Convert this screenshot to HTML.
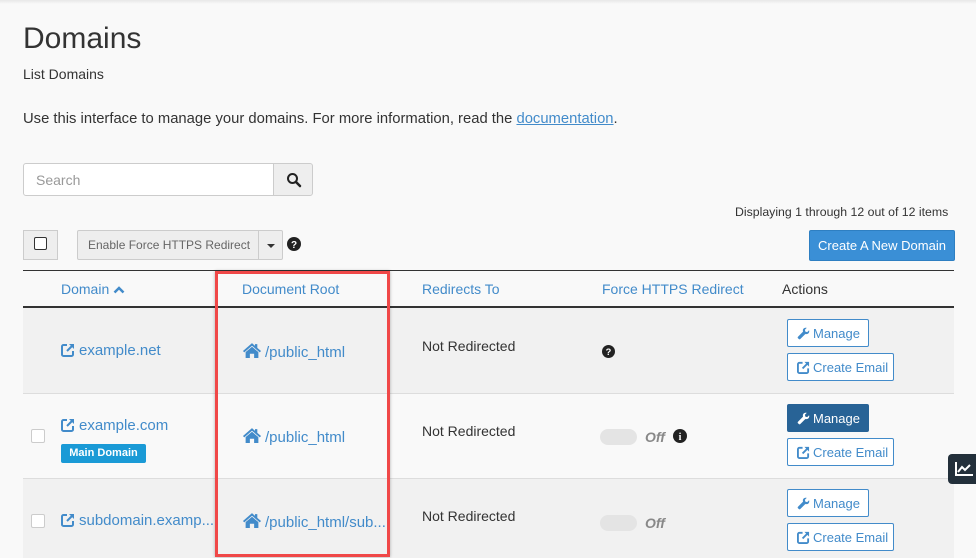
<!DOCTYPE html>
<html><head><style>
body{margin:0;width:976px;height:558px;overflow:hidden;background:#f9f9f9;font-family:"Liberation Sans",sans-serif;color:#333;position:relative}
.a{position:absolute}
.link{color:#428bca}
.btn{position:absolute;border:1px solid #428bca;color:#428bca;font-size:13px;height:28px;line-height:27px;box-sizing:border-box;background:#fff;padding-left:9px;border-radius:2px}
.btn svg{vertical-align:-2px;margin-right:3px}
.row{position:absolute;left:23px;width:931px;height:85px;border-top:1px solid #ddd;box-sizing:border-box}
.tog{position:absolute;width:37px;height:16px;border-radius:8px;background:#e4e4e4}
.off{position:absolute;font-style:italic;font-weight:bold;color:#888;font-size:14px}
.cb{position:absolute;width:12px;height:12px;border:1px solid #ccc;border-radius:2px;background:#fff}
.ic{vertical-align:-2px;margin-right:4px}
</style></head><body>
<svg width="0" height="0" style="position:absolute">
<defs>
<symbol id="ext" viewBox="0 0 14 14"><path d="M6 2H2.5C1.7 2 1 2.7 1 3.5v8C1 12.3 1.7 13 2.5 13h8c.8 0 1.5-.7 1.5-1.5V8" fill="none" stroke="currentColor" stroke-width="2"/><path d="M8 1h5v5z" fill="currentColor"/><path d="M12 2L6 8" stroke="currentColor" stroke-width="2"/></symbol>
<symbol id="home" viewBox="0 0 18 16"><path d="M9 1L0.5 8.5l1.2 1.3L9 3.5l7.3 6.3 1.2-1.3L14 5.5V2h-2.2v1.6z" fill="currentColor"/><path d="M3 9.5L9 4.5l6 5V15h-4v-4H7v4H3z" fill="currentColor"/></symbol>
<symbol id="wr" viewBox="0 0 14 14"><path d="M13 3.5l-2 2-2-.5-.5-2 2-2C8.5.3 6.3 1.5 6.3 3.8c0 .5.1.9.2 1.2L1.2 10.3a1.3 1.3 0 0 0 0 1.9l.6.6a1.3 1.3 0 0 0 1.9 0L9 7.5c.3.1.7.2 1.2.2 2.3 0 3.5-2.2 2.8-4.2z" fill="currentColor"/></symbol>
</defs></svg>
<div class="a" style="left:0;top:0;width:976px;height:4px;background:linear-gradient(#e8e8e8,#f9f9f9)"></div>
<div class="a" style="left:23px;top:22px;font-size:30px;color:#333">Domains</div>
<div class="a" style="left:23px;top:66px;font-size:14px">List Domains</div>
<div class="a" style="left:23px;top:111px;font-size:14.8px">Use this interface to manage your domains. For more information, read the <span class="link" style="text-decoration:underline">documentation</span>.</div>
<div class="a" style="left:23px;top:163px;width:251px;height:33px;border:1px solid #ccc;border-radius:3px 0 0 3px;background:#fff;box-sizing:border-box"><span style="position:absolute;left:12px;top:8px;font-size:14px;color:#999">Search</span></div>
<div class="a" style="left:273px;top:163px;width:40px;height:33px;border:1px solid #ccc;background:#eee;box-sizing:border-box;border-radius:0 3px 3px 0">
<svg width="16" height="16" viewBox="0 0 16 16" style="position:absolute;left:12px;top:8px"><circle cx="6.5" cy="6.5" r="4.5" fill="none" stroke="#222" stroke-width="2"/><path d="M10 10L14 14" stroke="#222" stroke-width="2.5" stroke-linecap="round"/></svg></div>
<div class="a" style="left:735px;top:205px;font-size:12.3px">Displaying 1 through 12 out of 12 items</div>
<div class="a" style="left:23px;top:230px;width:35px;height:30px;border:1px solid #ccc;background:#eee;box-sizing:border-box"><div style="position:absolute;left:10px;top:6px;width:11px;height:11px;border:1px solid #333;border-radius:2px;background:#fff"></div></div>
<div class="a" style="left:77px;top:230px;width:206px;height:30px;border:1px solid #ccc;background:#eee;box-sizing:border-box;border-radius:2px;font-size:12px;color:#666"><span style="position:absolute;left:10px;top:7px">Enable Force HTTPS Redirect</span><div style="position:absolute;left:180px;top:0;width:1px;height:28px;background:#ccc"></div><div style="position:absolute;left:189px;top:13px;border:4px solid transparent;border-top-color:#333"></div></div>
<svg class="a" style="left:287px;top:237px" width="14" height="14" viewBox="0 0 14 14"><circle cx="7" cy="7" r="7" fill="#222"/><text x="7" y="11" fill="#fff" font-size="10" font-weight="bold" text-anchor="middle" font-family="Liberation Sans">?</text></svg>
<div class="a" style="left:809px;top:230px;width:146px;height:31px;background:#3a8fd6;border:1px solid #2e7fc2;box-sizing:border-box;border-radius:2px;color:#fff;font-size:13px;line-height:29px;text-align:center">Create A New Domain</div>
<div class="a" style="left:23px;top:270px;width:931px;height:1px;background:#333"></div>
<div class="a" style="left:23px;top:306px;width:931px;height:2px;background:#333"></div>
<div class="a link" style="left:61px;top:281px;font-size:14px">Domain <svg width="12" height="9" viewBox="0 0 12 9" style="vertical-align:0"><path d="M1.5 7.5L6 3l4.5 4.5" fill="none" stroke="#428bca" stroke-width="2.5"/></svg></div>
<div class="a link" style="left:242px;top:281px;font-size:14px">Document Root</div>
<div class="a link" style="left:422px;top:281px;font-size:14px">Redirects To</div>
<div class="a link" style="left:602px;top:281px;font-size:14px">Force HTTPS Redirect</div>
<div class="a" style="left:782px;top:281px;font-size:14px">Actions</div>
<div class="row" style="top:308px;background:#f1f1f1;border-top:none"></div>
<div class="row" style="top:393px;background:#f9f9f9"></div>
<div class="row" style="top:478px;background:#f1f1f1;height:80px"></div>
<!-- row1 -->
<div class="a link" style="left:61px;top:342px;font-size:15px"><svg class="ic" width="14" height="14"><use href="#ext"/></svg>example.net</div>
<div class="a link" style="left:242px;top:342px;font-size:15px"><svg class="ic" width="20" height="17" style="margin-right:3px"><use href="#home"/></svg>/public_html</div>
<div class="a" style="left:422px;top:338px;font-size:14px">Not Redirected</div>
<svg class="a" style="left:602px;top:345px" width="13" height="13" viewBox="0 0 14 14"><circle cx="7" cy="7" r="7" fill="#222"/><text x="7" y="11" fill="#fff" font-size="10" font-weight="bold" text-anchor="middle" font-family="Liberation Sans">?</text></svg>
<div class="btn" style="left:787px;top:319px;width:82px"><svg width="13" height="13"><use href="#wr"/></svg>Manage</div>
<div class="btn" style="left:787px;top:353px;width:107px"><svg width="13" height="13"><use href="#ext"/></svg>Create Email</div>
<!-- row2 -->
<div class="cb" style="left:31px;top:429px"></div>
<div class="a link" style="left:61px;top:417px;font-size:15px"><svg class="ic" width="14" height="14"><use href="#ext"/></svg>example.com</div>
<div class="a" style="left:61px;top:444px;width:85px;height:19px;background:#1a9ad6;border-radius:2px;color:#fff;font-size:11px;font-weight:bold;line-height:19px;text-align:center">Main Domain</div>
<div class="a link" style="left:242px;top:427px;font-size:15px"><svg class="ic" width="20" height="17" style="margin-right:3px"><use href="#home"/></svg>/public_html</div>
<div class="a" style="left:422px;top:423px;font-size:14px">Not Redirected</div>
<div class="tog" style="left:600px;top:429px"></div><div class="off" style="left:645px;top:429px">Off</div>
<svg class="a" style="left:673px;top:429px" width="14" height="14" viewBox="0 0 14 14"><circle cx="7" cy="7" r="7" fill="#222"/><text x="7" y="11" fill="#fff" font-size="10" font-weight="bold" text-anchor="middle" font-family="Liberation Serif">i</text></svg>
<div class="btn" style="left:787px;top:404px;width:82px;background:#286396;border-color:#286396;color:#fff"><svg width="13" height="13"><use href="#wr"/></svg>Manage</div>
<div class="btn" style="left:787px;top:438px;width:107px"><svg width="13" height="13"><use href="#ext"/></svg>Create Email</div>
<!-- row3 -->
<div class="cb" style="left:31px;top:514px"></div>
<div class="a link" style="left:61px;top:512px;font-size:15px"><svg class="ic" width="14" height="14"><use href="#ext"/></svg>subdomain.examp...</div>
<div class="a link" style="left:242px;top:512px;font-size:15px"><svg class="ic" width="20" height="17" style="margin-right:3px"><use href="#home"/></svg>/public_html/sub...</div>
<div class="a" style="left:422px;top:508px;font-size:14px">Not Redirected</div>
<div class="tog" style="left:600px;top:515px"></div><div class="off" style="left:645px;top:515px">Off</div>
<div class="btn" style="left:787px;top:489px;width:82px"><svg width="13" height="13"><use href="#wr"/></svg>Manage</div>
<div class="btn" style="left:787px;top:523px;width:107px"><svg width="13" height="13"><use href="#ext"/></svg>Create Email</div>
<!-- red box -->
<div class="a" style="left:215px;top:271px;width:175px;height:286px;border:3px solid #f04848;box-sizing:border-box;box-shadow:0 0 3px rgba(0,0,0,.3)"></div>
<div class="a" style="left:948px;top:454px;width:30px;height:30px;background:#23303b;border-radius:4px 0 0 4px">
<svg width="20" height="16" viewBox="0 0 20 16" style="position:absolute;left:6px;top:7px"><path d="M2 1V14H19" fill="none" stroke="#fff" stroke-width="2"/><path d="M4 11L8 6L11 9L16 4" fill="none" stroke="#fff" stroke-width="2"/></svg></div>
</body></html>
